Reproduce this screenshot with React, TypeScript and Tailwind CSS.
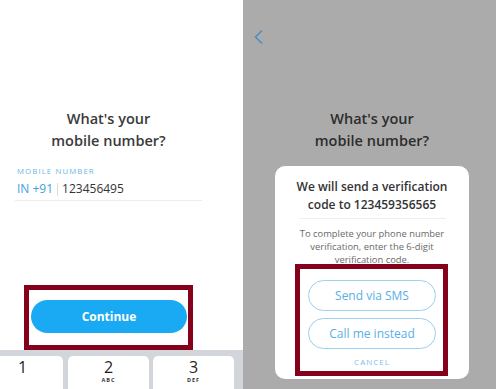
import React from "react";

const font = { fontFamily: '"Open Sans", "Liberation Sans", sans-serif' };

function Key({ num, letters, className = "" }: { num: string; letters?: string; className?: string }) {
  return (
    <div
      className={
        "flex h-[40px] w-[81px] shrink-0 flex-col items-center rounded-[5px] bg-white pt-[3px] shadow-[0_1px_0_#8e9094] " +
        className
      }
    >
      <div className="h-[16px] text-[16px] leading-[16px] font-normal text-[#1f1f1f]">{num}</div>
      {letters && (
        <div className="mt-[2px] h-[6px] text-[5.5px] leading-[6px] font-bold tracking-[1px] text-[#333]">{letters}</div>
      )}
    </div>
  );
}

function Heading({ color }: { color: string }) {
  return (
    <h1 className={"text-center text-[14.5px] leading-[22px] font-semibold " + color}>
      What's your
      <br />
      mobile number?
    </h1>
  );
}

export default function App() {
  return (
    <div className="flex h-[389px] w-[496px] overflow-hidden bg-white" style={font}>
      {/* Left screen */}
      <div className="flex w-[243px] shrink-0 flex-col bg-white">
        <div className="flex w-[217px] flex-col pt-[108px]">
          <Heading color="text-[#3a3a3a]" />
          <div className="mx-[15px] mt-[14px]">
            <div className="pl-[2px] text-[7.8px] leading-[10px] tracking-[1.1px] text-[#6cb6e6]">MOBILE NUMBER</div>
            <div className="mt-[5px] flex items-center border-b border-[#ececec] pb-[3px] pl-[2px] text-[12px] leading-[16px]">
              <span className="text-[#3fa1e0]">IN +91</span>
              <span className="mx-[4px] h-[13px] w-px bg-[#dcdcdc]" />
              <span className="text-[#333]">123456495</span>
            </div>
          </div>
          <div className="mx-auto mt-[84px] w-[169px] border-[5px] border-[#85001b] pt-[10px] pr-[1px] pb-[12px] pl-[2px]">
            <button className="flex h-[33px] w-full items-center justify-center rounded-full bg-[#1aa9f3] text-[12px] font-bold text-white">
              Continue
            </button>
          </div>
        </div>
        <div className="flex flex-1 gap-[4px] overflow-hidden bg-[#d2d5da] pt-[6px]">
          <Key num="1" className="-ml-[18px] mr-[1px]" />
          <Key num="2" letters="ABC" />
          <Key num="3" letters="DEF" />
        </div>
      </div>

      {/* Right screen */}
      <div className="relative flex flex-1 flex-col bg-[#ababab]">
        <svg className="absolute top-[30px] left-[11px]" width="9" height="14" viewBox="0 0 9 14" fill="none">
          <polyline points="7.5,1 1.5,7 7.5,13" stroke="#4b8cc4" strokeWidth="1.5" strokeLinecap="round" strokeLinejoin="round" />
        </svg>
        <div className="ml-[32px] flex w-[194px] flex-col pt-[108px]">
          <Heading color="text-[#2d2d2d]" />
          <div className="mt-[14px] flex flex-col rounded-[10px] bg-white pt-[12px] pb-[3px]">
            <div className="text-center text-[12px] leading-[18px] font-semibold text-[#333]">
              We will send a verification
              <br />
              code to 123459356565
            </div>
            <div className="mt-[4px] mr-[23px] ml-[24px] h-px bg-[#efefef]" />
            <div className="mt-[8px] text-center text-[9.4px] leading-[13px] text-[#6a6a6a]">
              To complete your phone number
              <br />
              verification, enter the 6-digit
              <br />
              verification code.
            </div>
            <div className="-mt-[2px] mr-[21px] ml-[20px] flex flex-col border-[5px] border-[#85001b] pt-[11px] pr-[7px] pb-[4px] pl-[8px]">
              <button className="h-[31px] rounded-full border border-[#9ccff0] text-[12px] text-[#58afe6]">
                Send via SMS
              </button>
              <button className="mt-[7px] h-[31px] rounded-full border border-[#9ccff0] text-[12px] text-[#58afe6]">
                Call me instead
              </button>
              <div className="mt-[8px] text-center text-[8px] leading-[10px] tracking-[1px] text-[#7cc0ea]">CANCEL</div>
            </div>
          </div>
        </div>
      </div>
    </div>
  );
}
